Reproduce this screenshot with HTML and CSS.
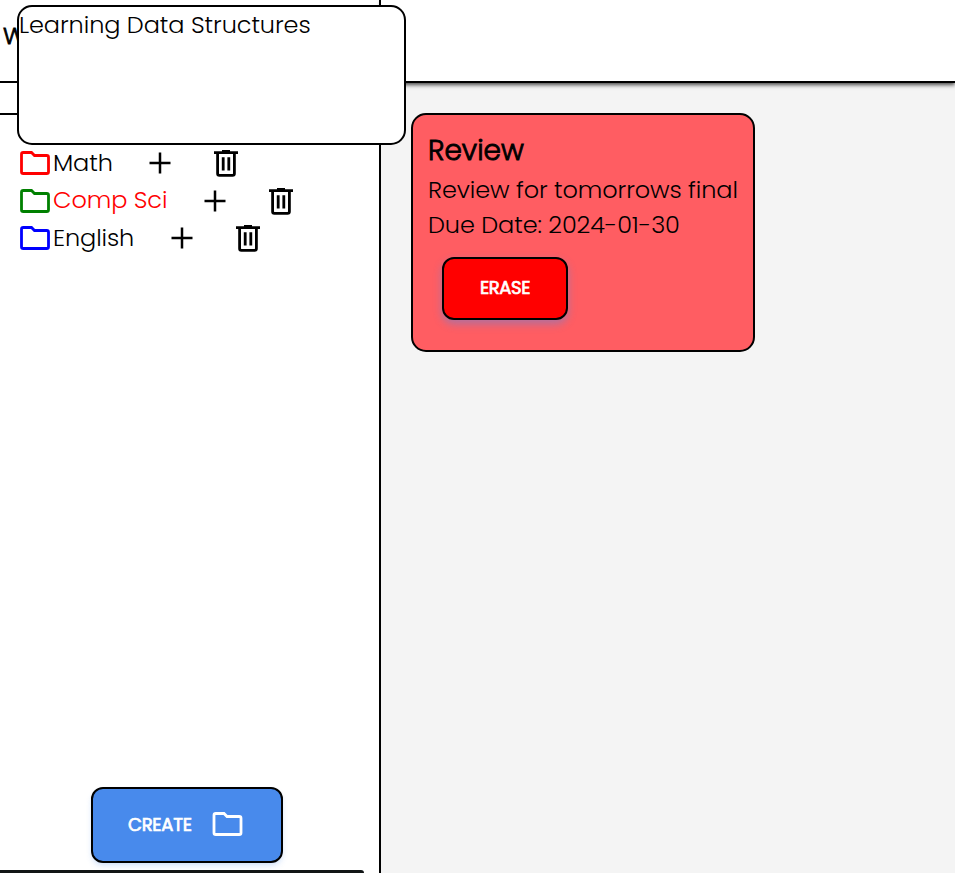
FILE: index.html
```html
<!DOCTYPE html>
<html lang="en">
<head>
<meta charset="utf-8">
<title>Tasks</title>
<link rel="stylesheet" href="styles.css">
</head>
<body>
<svg class="defs" aria-hidden="true">
  <symbol id="folder" viewBox="0 0 30 24"><path d="M3.3 1.5h8.2l3 3h12.2q1.8 0 1.8 1.8v14.4q0 1.8-1.8 1.8H3.3q-1.8 0-1.8-1.8V3.3q0-1.8 1.8-1.8z" fill="none" stroke="currentColor" stroke-width="2.8"/></symbol>
  <symbol id="plus" viewBox="0 0 22 22"><path d="M11 .5v21M.5 11h21" fill="none" stroke="currentColor" stroke-width="2.5"/></symbol>
  <symbol id="trash" viewBox="0 0 24 27"><path d="M0 2.6h24M8 1.4h8M3.6 2v21.5q0 1.8 1.8 1.8h13.2q1.8 0 1.8-1.8V2M9.2 7.3v13.2M14.8 7.3v13.2" fill="none" stroke="currentColor" stroke-width="2.8"/></symbol>
</svg>
<div class="app">
  <aside class="sidebar">
    <div class="welcome">W</div>
    <div class="strip"></div>
    <ul class="folders">
      <li class="folder red"><svg class="i-folder"><use href="#folder"/></svg><span class="name math">Math</span><svg class="i-plus"><use href="#plus"/></svg><svg class="i-trash"><use href="#trash"/></svg></li>
      <li class="folder green"><svg class="i-folder"><use href="#folder"/></svg><span class="name comp">Comp Sci</span><svg class="i-plus"><use href="#plus"/></svg><svg class="i-trash"><use href="#trash"/></svg></li>
      <li class="folder blue"><svg class="i-folder"><use href="#folder"/></svg><span class="name english">English</span><svg class="i-plus"><use href="#plus"/></svg><svg class="i-trash"><use href="#trash"/></svg></li>
    </ul>
    <button class="btn create"><span class="create-label">CREATE</span><svg class="i-create"><use href="#folder"/></svg></button>
    <div class="bottom-bar"></div>
  </aside>
  <main class="main">
    <header class="topbar"></header>
    <article class="card">
      <h2 class="card-title"><span>Review</span></h2>
      <p class="desc">Review for tomorrows final</p>
      <p class="due">Due Date: 2024-01-30</p>
      <button class="btn erase"><span class="erase-label">ERASE</span></button>
    </article>
  </main>
  <div class="popup"><span class="popup-text">Learning Data Structures</span></div>
</div>
</body>
</html>
```
FILE: styles.css
```css
* { box-sizing: border-box; margin: 0; padding: 0; }
body {
  font-family: Poppins, Inter, "Liberation Sans", sans-serif;
  font-weight: 300;
  font-size: 24px;
  color: #000;
  overflow: hidden;
}
.defs { display: none; }
svg { display: block; flex: none; }
.app { position: relative; display: flex; height: 873px; overflow: hidden; }
.sidebar {
  width: 381px;
  flex: none;
  display: flex;
  flex-direction: column;
  background: #fff;
  border-right: 2px solid #000;
}
.welcome {
  height: 83px;
  padding: 19px 0 0 3px;
  border-bottom: 2px solid #000;
  font-size: 24px;
  line-height: 34px;
  -webkit-text-stroke: .8px #000;
}
.strip { height: 32px; border-bottom: 2px solid #000; }
.folders { list-style: none; padding: 29px 0 0 20px; }
.folder { display: flex; align-items: center; height: 37.5px; }
.i-folder { width: 30px; height: 24px; }
.red .i-folder { color: red; }
.green .i-folder { color: green; }
.green svg { margin-top: 1.5px; }
.blue .i-folder { color: blue; }
.name { margin-left: 3px; line-height: 36px; white-space: nowrap; }
.math { width: 96px; letter-spacing: -.1px; }
.comp { width: 151px; color: red; letter-spacing: -.1px; }
.english { width: 118px; letter-spacing: -.1px; }
.i-plus { width: 22px; height: 22px; }
.folder .i-trash { width: 24px; height: 27px; margin: 1px 0 0 43px; }
.green .i-trash { margin-top: 2px; }
.btn {
  display: flex;
  align-items: center;
  border: 2px solid #000;
  border-radius: 12px;
  color: #fff;
  font: 400 18px Poppins, Inter, sans-serif;
  -webkit-text-stroke: .7px #fff;
}
.create {
  width: 192px;
  height: 76px;
  margin: auto 0 7px 91px;
  padding: 0 0 2px 35px;
  background: #488aec;
  box-shadow: 0 4px 6px -1px #488aec31, 0 2px 4px -1px #488aec17;
}
.create-label { width: 84px; text-align: left; letter-spacing: -.25px; }
.i-create { width: 31px; height: 24px; }
.bottom-bar { width: 364px; height: 3px; background: #111516; border-top-right-radius: 5px; flex: none; }
.main { flex: 1; background: #f4f4f4; }
.topbar {
  height: 83px;
  background: #fff;
  border-bottom: 2px solid #000;
  box-shadow: 0 2px 4px rgba(0, 0, 0, .7);
}
.card {
  width: 344px;
  height: 239px;
  margin: 30px 0 0 30px;
  padding: 17px 0 0 15px;
  border: 2px solid #000;
  border-radius: 15px;
  background: #ff5d62;
  white-space: nowrap;
}
.card-title { font-size: 28px; font-weight: 300; line-height: 38px; -webkit-text-stroke: .9px #000; }
.desc { line-height: 39px; letter-spacing: -.1px; }
.due { line-height: 32px; letter-spacing: -.1px; }
.erase {
  width: 126px;
  height: 63px;
  margin: 16px 0 0 14px;
  justify-content: center;
  padding-bottom: 2px;
  background: red;
  box-shadow: 0 4px 9px #488aec70;
}
.erase-label { letter-spacing: -.4px; }
.popup {
  position: absolute;
  left: 17px;
  top: 5px;
  width: 389px;
  height: 140px;
  border: 2px solid #000;
  border-radius: 15px;
  background: #fff;
  line-height: 36px;
}
.popup-text { letter-spacing: -.08px; }
```
